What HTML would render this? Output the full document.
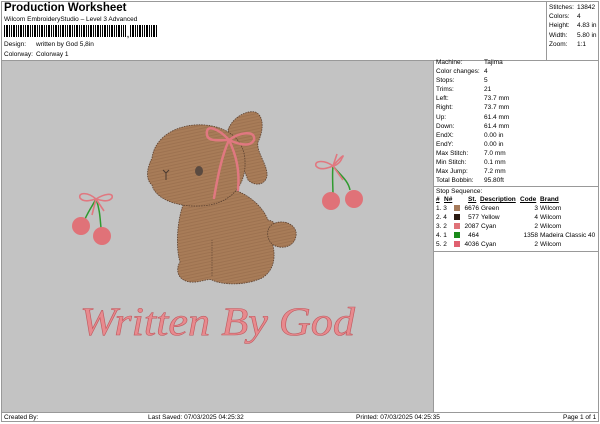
<!DOCTYPE html>
<html><head><style>
*{margin:0;padding:0;box-sizing:border-box}
body{width:600px;height:424px;background:#fff;font-family:"Liberation Sans",sans-serif;font-size:7px;color:#000;position:relative;overflow:hidden}
.a{position:absolute;white-space:nowrap;line-height:9px}
.r{font-size:6.5px}
.l{position:absolute;background:#999}
</style></head><body>
<div class="l" style="left:1px;top:1px;width:598px;height:1px"></div>
<div class="l" style="left:1px;top:1px;width:1px;height:421px"></div>
<div class="l" style="left:598px;top:1px;width:1px;height:421px"></div>
<div class="l" style="left:1px;top:421px;width:598px;height:1px"></div>
<div class="l" style="left:1px;top:60px;width:598px;height:1px"></div>
<div class="l" style="left:546px;top:1px;width:1px;height:60px"></div>
<div class="l" style="left:1px;top:412px;width:598px;height:1px"></div>
<div class="l" style="left:433px;top:60px;width:1px;height:352px"></div>
<div class="l" style="left:433px;top:186px;width:166px;height:1px"></div>
<div class="l" style="left:433px;top:251px;width:166px;height:1px"></div>

<div class="a" style="left:4px;top:1px;font-size:11.5px;font-weight:bold;line-height:14px">Production Worksheet</div>
<div class="a r" style="left:4px;top:15px">Wilcom EmbroideryStudio – Level 3 Advanced</div>
<div class="a" style="left:4px;top:25px;width:154px;height:12px;background:repeating-linear-gradient(90deg,#000 0 1px,#fff 1px 2px,#000 2px 4px,#fff 4px 5px,#000 5px 6px,#fff 6px 7px)"></div>
<div class="a" style="left:126px;top:25px;width:4px;height:12px;background:#fff"></div>
<div class="a" style="left:127px;top:31px;font-weight:bold">,</div>
<div class="a r" style="left:4px;top:40px">Design:</div>
<div class="a r" style="left:36px;top:40px">written by God 5,8in</div>
<div class="a r" style="left:4px;top:50px">Colorway:</div>
<div class="a r" style="left:36px;top:50px">Colorway 1</div>

<div class="a r" style="left:549px;top:3px;line-height:9.2px">Stitches:<br>Colors:<br>Height:<br>Width:<br>Zoom:</div>
<div class="a r" style="left:577px;top:3px;line-height:9.2px">13842<br>4<br>4.83 in<br>5.80 in<br>1:1</div>

<div style="position:absolute;left:2px;top:61px;width:431px;height:351px;background:#c3c3c3"></div>
<svg style="position:absolute;left:0;top:0" width="600" height="424">
 <defs><pattern id="st" width="4" height="3" patternUnits="userSpaceOnUse" patternTransform="rotate(-12)"><rect width="4" height="3" fill="#a87c58"/><rect y="2" width="4" height="1" fill="#9d7250"/></pattern></defs>
 <path d="M228,130 C232,118 246,110 255,112 C264,115 264,130 258,142 C256,152 268,165 267,176 C265,186 254,186 248,180 Z" fill="url(#st)" stroke="#5a4030" stroke-width="0.8" stroke-dasharray="1.5 1"/>
 <path d="M185,200 C176,220 176,250 180,262 C176,268 176,280 190,282 C200,283 208,278 212,280 C222,285 245,286 262,278 C275,270 276,255 272,242 C280,238 280,222 268,220 C262,205 248,195 235,190 Z" fill="url(#st)" stroke="#5a4030" stroke-width="0.8" stroke-dasharray="1.5 1"/>
 <path d="M273,224 C285,218 298,226 296,236 C294,248 280,250 272,244 C266,238 266,228 273,224Z" fill="url(#st)" stroke="#5a4030" stroke-width="0.8" stroke-dasharray="1.5 1"/>
 <path d="M152,158 C155,135 180,123 205,125 C228,127 245,140 245,162 C246,188 228,205 200,206 C175,207 155,198 152,185 C146,180 146,170 152,158Z" fill="url(#st)" stroke="#5a4030" stroke-width="0.8" stroke-dasharray="1.5 1"/>
 <path d="M212,276 L212,240" stroke="#5a4030" stroke-width="0.6" stroke-dasharray="1.5 1"/>
 <ellipse cx="199" cy="171" rx="4" ry="5" fill="#5a4a40"/>
 <path d="M163,170 l3,3 l3,-3 M166,173 v7" stroke="#4a3a30" stroke-width="1" fill="none"/>
 <g stroke="#e07880" stroke-width="2.5" fill="none" stroke-linecap="round">
  <path d="M229,140 C220,130 205,122 207,135 C208,142 220,140 229,140 C240,132 256,130 254,140 C250,148 238,144 229,140"/>
  <path d="M229,140 C222,155 218,175 214,198"/>
  <path d="M229,140 C236,155 240,170 238,190"/>
 </g>
 <g>
  <path d="M96,199 C90,210 86,215 84,222 M96,199 C100,210 100,218 101,228" stroke="#2f9a2f" stroke-width="1.5" fill="none"/>
  <path d="M96,199 C88,192 78,192 80,198 C84,203 92,200 96,199 C104,194 114,192 112,198 C108,203 100,200 96,199 M96,199 l-4,16 M96,199 l8,12" stroke="#e07880" stroke-width="1.6" fill="none"/>
  <circle cx="81" cy="226" r="9" fill="#e07278"/>
  <circle cx="102" cy="236" r="9" fill="#e07278"/>
 </g>
 <g>
  <path d="M333,166 C332,175 333,185 333,197 M333,166 C340,175 348,180 350,190" stroke="#2f9a2f" stroke-width="1.5" fill="none"/>
  <path d="M333,166 C325,160 314,160 316,166 C320,171 328,168 333,166 C338,160 346,152 342,158 C340,164 334,166 333,166 M333,166 l4,-12 M333,166 l10,14" stroke="#e07880" stroke-width="1.6" fill="none"/>
  <circle cx="331" cy="201" r="9" fill="#e07278"/>
  <circle cx="354" cy="199" r="9" fill="#e07278"/>
 </g>
 <text x="80" y="335" font-family="Liberation Serif,serif" font-style="italic" font-size="40" fill="#e88a8e" stroke="#c05a60" stroke-width="0.6" textLength="275" lengthAdjust="spacingAndGlyphs">Written By God</text>
</svg>

<div class="a r" style="left:436px;top:58px;line-height:9.1px">Machine:<br>Color changes:<br>Stops:<br>Trims:<br>Left:<br>Right:<br>Up:<br>Down:<br>EndX:<br>EndY:<br>Max Stitch:<br>Min Stitch:<br>Max Jump:<br>Total Bobbin:</div>
<div class="a r" style="left:484px;top:58px;line-height:9.1px">Tajima<br>4<br>5<br>21<br>73.7 mm<br>73.7 mm<br>61.4 mm<br>61.4 mm<br>0.00 in<br>0.00 in<br>7.0 mm<br>0.1 mm<br>7.2 mm<br>95.80ft</div>
<div class="a r" style="left:436px;top:187px">Stop Sequence:</div>
<div class="a r" style="left:436px;top:195px;font-weight:bold;text-decoration:underline">#</div>
<div class="a r" style="left:444px;top:195px;font-weight:bold;text-decoration:underline">N#</div>
<div class="a r" style="left:468px;top:195px;font-weight:bold;text-decoration:underline">St.</div>
<div class="a r" style="left:480px;top:195px;font-weight:bold;text-decoration:underline">Description</div>
<div class="a r" style="left:520px;top:195px;font-weight:bold;text-decoration:underline">Code</div>
<div class="a r" style="left:540px;top:195px;font-weight:bold;text-decoration:underline">Brand</div>
<div class="a r" style="left:436px;top:204px;line-height:9px">1. 3<br>2. 4<br>3. 2<br>4. 1<br>5. 2</div>
<div class="a" style="left:454px;top:205px;width:6px;height:6px;background:#a67b5b"></div>
<div class="a" style="left:454px;top:214px;width:6px;height:6px;background:#2a1a10"></div>
<div class="a" style="left:454px;top:223px;width:6px;height:6px;background:#e07278"></div>
<div class="a" style="left:454px;top:232px;width:6px;height:6px;background:#1a8a1a"></div>
<div class="a" style="left:454px;top:241px;width:6px;height:6px;background:#e06070"></div>
<div class="a r" style="left:460px;top:204px;width:19px;text-align:right;line-height:9px">6676<br>577<br>2087<br>464<br>4036</div>
<div class="a r" style="left:481px;top:204px;line-height:9px">Green<br>Yellow<br>Cyan<br><br>Cyan</div>
<div class="a r" style="left:500px;top:204px;width:38px;text-align:right;line-height:9px">3<br>4<br>2<br>1358<br>2</div>
<div class="a r" style="left:540px;top:204px;line-height:9px">Wilcom<br>Wilcom<br>Wilcom<br>Madeira Classic 40<br>Wilcom</div>

<div class="a r" style="left:4px;top:413px">Created By:</div>
<div class="a r" style="left:148px;top:413px">Last Saved: 07/03/2025 04:25:32</div>
<div class="a r" style="left:356px;top:413px">Printed: 07/03/2025 04:25:35</div>
<div class="a r" style="left:563px;top:413px">Page 1 of 1</div>
</body></html>
